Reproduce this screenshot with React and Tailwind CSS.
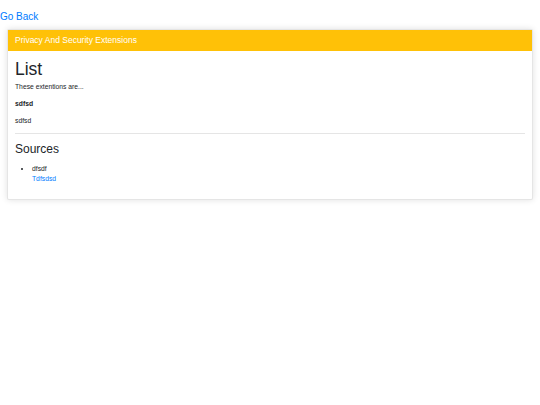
export default function App() {
  return (
    <div className="min-h-screen bg-white text-[#212529] font-['Liberation_Sans',Arial,sans-serif] text-[6.75px] leading-[1.5]">
      <a href="#" className="block pt-[9px] text-[10px] leading-[15px] text-[#007bff]">
        Go Back
      </a>

      <div className="mx-[7px] mt-[5px] rounded-[2px] border border-black/10 bg-white shadow-[0_0_6px_rgba(0,0,0,0.12)]">
        <div className="bg-[#ffc107] px-[7px] py-[4px] text-[8.5px] leading-[12.75px] text-white">
          Privacy And Security Extensions
        </div>

        <div className="px-[7px] pt-[8.5px] pb-[8px]">
          <h1 className="mb-[2px] text-[17.5px] leading-[21px] font-normal">List</h1>
          <p className="mb-[6.9px]">These extentions are...</p>
          <p className="mb-[6.9px] font-bold">sdfsd</p>
          <p className="mb-[6.9px]">sdfsd</p>

          <hr className="border-t border-black/10 mb-[7.5px]" />

          <h3 className="mb-[3.4px] text-[12px] leading-[14.4px] font-normal">Sources</h3>
          <ul className="mt-[8px] mb-[6.9px] list-disc pl-[17px]">
            <li>
              dfsdf
              <a href="#" className="block text-[#007bff]">
                Tdfsdsd
              </a>
            </li>
          </ul>
        </div>
      </div>
    </div>
  );
}
